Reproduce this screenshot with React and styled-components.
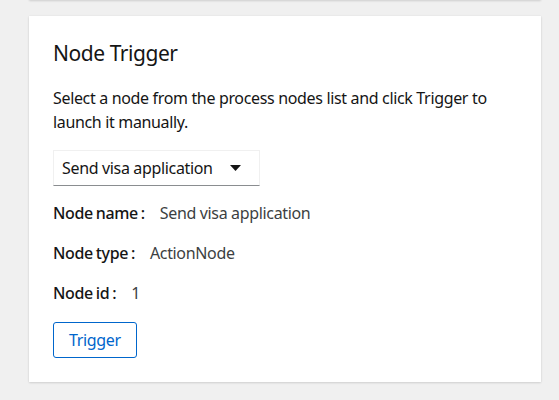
import React, { useState } from "react";
import styled, { createGlobalStyle } from "styled-components";

const GlobalStyle = createGlobalStyle`
  body {
    margin: 0;
    background: #f0f0f0;
    font-family: "Noto Sans", "Liberation Sans", sans-serif;
    color: #151515;
  }
`;

const Page = styled.main`
  display: flex;
  flex-direction: column;
  gap: 16px;
  padding: 0 18px 18px 29px;
`;

const PrevCard = styled.section`
  height: 40px;
  margin-top: -40px;
  background: #fff;
  box-shadow: 0 1px 2px 0 rgba(3, 3, 3, 0.12), 0 0 2px 0 rgba(3, 3, 3, 0.06);
`;

const Card = styled.section`
  background: #fff;
  padding: 24px;
  box-shadow: 0 1px 2px 0 rgba(3, 3, 3, 0.12), 0 0 2px 0 rgba(3, 3, 3, 0.06);
`;

const Title = styled.h1`
  margin: 0 0 20px;
  font-size: 21px;
  line-height: 26px;
  font-weight: 400;
  letter-spacing: -0.45px;
`;

const Description = styled.p`
  margin: 0 0 16px;
  font-size: 16px;
  line-height: 24px;
  letter-spacing: -0.34px;
`;

const SelectBox = styled.div`
  display: flex;
  align-items: center;
  justify-content: space-between;
  box-sizing: border-box;
  width: 207px;
  height: 36px;
  padding: 0 18px 0 8px;
  border: 1px solid #f0f0f0;
  border-bottom-color: #8a8d90;
  font-size: 16px;
  letter-spacing: -0.34px;
  cursor: pointer;
`;

const Details = styled.div`
  display: flex;
  flex-direction: column;
  gap: 16px;
  margin: 15px 0 17px;
`;

const Row = styled.div`
  display: flex;
  gap: 15px;
  font-size: 16px;
  line-height: 24px;
  letter-spacing: -0.34px;
`;

const Label = styled.b`
  font-weight: 500;
  word-spacing: -1px;
`;

const Value = styled.span`
  color: #3c3f42;
`;

const Button = styled.button`
  font-family: inherit;
  font-size: 16px;
  line-height: 24px;
  letter-spacing: -0.34px;
  padding: 5px 15px;
  color: #06c;
  background: #fff;
  border: 1px solid #06c;
  border-radius: 3px;
  cursor: pointer;
`;

const Caret = () => (
  <svg width="11" height="7" viewBox="0 0 11 7" aria-hidden="true">
    <polygon points="0,0 11,0 5.5,6" fill="#151515" />
  </svg>
);

export default function App() {
  const [node] = useState({ name: "Send visa application", type: "ActionNode", id: 1 });
  return (
    <>
      <GlobalStyle />
      <Page>
        <PrevCard />
        <Card>
          <Title>Node Trigger</Title>
          <Description>
            Select a node from the process nodes list and click Trigger to launch it manually.
          </Description>
          <SelectBox>
            <span>{node.name}</span>
            <Caret />
          </SelectBox>
          <Details>
            <Row>
              <Label>Node name :</Label>
              <Value>{node.name}</Value>
            </Row>
            <Row>
              <Label>Node type :</Label>
              <Value>{node.type}</Value>
            </Row>
            <Row>
              <Label>Node id :</Label>
              <Value>{node.id}</Value>
            </Row>
          </Details>
          <Button>Trigger</Button>
        </Card>
      </Page>
    </>
  );
}
